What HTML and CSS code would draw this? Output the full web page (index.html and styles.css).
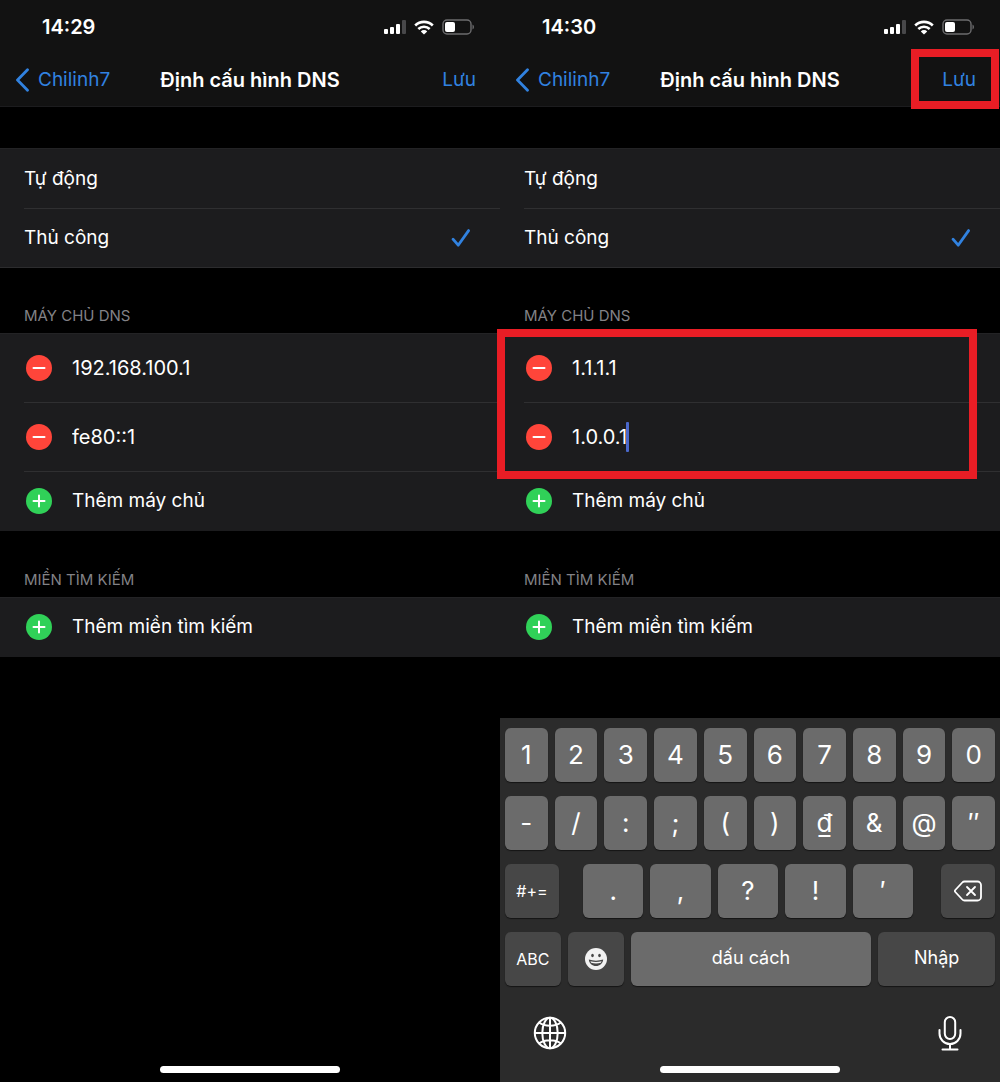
FILE: index.html
```html
<!DOCTYPE html>
<html lang="vi">
  <head>
    <meta charset="UTF-8" />
    <meta name="viewport" content="width=device-width, initial-scale=1.0" />
    <title>Định cấu hình DNS</title>
    <link rel="stylesheet" href="styles.css">
  </head>
  <body>
    <!-- shared icons -->
    <svg class="icon-defs" aria-hidden="true">
      <symbol id="icon-signal" viewBox="0 0 22 15">
        <rect x="0" y="9" width="4" height="5" rx="1" fill="#fff" />
        <rect x="6" y="7" width="4" height="7" rx="1" fill="#fff" />
        <rect x="12" y="4" width="4" height="10" rx="1" fill="#fff" />
        <rect x="18" y="0" width="4" height="14" rx="1" fill="#48484a" />
      </symbol>
      <symbol id="icon-wifi" viewBox="0 0 20 15">
        <g fill="none" stroke="#fff" stroke-width="2.6">
          <path d="M1.2 5.5a12.6 12.6 0 0 1 17.6 0" />
          <path d="M4.3 9a8.2 8.2 0 0 1 11.4 0" />
        </g>
        <path d="M10 14.6l-3.2-3.2a4.6 4.6 0 0 1 6.4 0z" fill="#fff" />
      </symbol>
      <symbol id="icon-battery" viewBox="0 0 33 16">
        <rect x="1" y="1" width="28" height="14" rx="4" fill="none" stroke="#6c6c6e" stroke-width="1.4" />
        <rect x="3" y="3" width="10" height="10" rx="2" fill="#fff" />
        <path d="M30.5 5.5v5c2-1 2-4 0-5z" fill="#6c6c6e" />
      </symbol>
      <symbol id="icon-back" viewBox="0 0 15 24">
        <path d="M12.5 1.8L2.5 12l10 10.2" fill="none" stroke="currentColor" stroke-width="2.8" stroke-linecap="round" stroke-linejoin="round" />
      </symbol>
      <symbol id="icon-check" viewBox="0 0 20 20">
        <path d="M2 11.2l5.2 6L17.6 2.6" fill="none" stroke="currentColor" stroke-width="2.8" stroke-linecap="round" stroke-linejoin="round" />
      </symbol>
      <symbol id="icon-minus" viewBox="0 0 26 26">
        <circle cx="13" cy="13" r="13" fill="#ff453a" />
        <path d="M7.5 13h11" stroke="#fff" stroke-width="2" stroke-linecap="round" />
      </symbol>
      <symbol id="icon-plus" viewBox="0 0 26 26">
        <circle cx="13" cy="13" r="13" fill="#30d158" />
        <path d="M7.5 13h11M13 7.5v11" stroke="#fff" stroke-width="2" stroke-linecap="round" />
      </symbol>
    </svg>

    <main class="screens">
      <section class="screen">
        <header class="top">
          <div class="status-bar">
            <time class="clock">14:29</time>
            <div class="status-icons">
              <svg width="22" height="15"><use href="#icon-signal" /></svg>
              <svg width="20" height="15"><use href="#icon-wifi" /></svg>
              <svg width="33" height="16"><use href="#icon-battery" /></svg>
            </div>
          </div>
          <nav class="nav-bar">
            <a href="#" class="nav-back"><svg width="15" height="24"><use href="#icon-back" /></svg>Chilinh7</a>
            <h1 class="nav-title">Định cấu hình DNS</h1>
            <button type="button" class="nav-save">Lưu</button>
          </nav>
        </header>

        <div class="group group-mode">
          <label class="row row-mode">
            <span>Tự động</span>
            <input type="radio" name="mode-left" class="mode-input" />
            <svg class="mode-check" width="20" height="20"><use href="#icon-check" /></svg>
          </label>
          <label class="row row-mode">
            <span>Thủ công</span>
            <input type="radio" name="mode-left" class="mode-input" checked />
            <svg class="mode-check" width="20" height="20"><use href="#icon-check" /></svg>
          </label>
        </div>

        <h2 class="group-title">MÁY CHỦ DNS</h2>
        <div class="group">
          <div class="servers">
            <div class="row row-server">
              <button type="button" class="btn-icon" aria-label="Xóa"><svg width="26" height="26"><use href="#icon-minus" /></svg></button>
              <input type="text" class="server-input" aria-label="Máy chủ DNS 1" value="192.168.100.1" />
            </div>
            <div class="row row-server">
              <button type="button" class="btn-icon" aria-label="Xóa"><svg width="26" height="26"><use href="#icon-minus" /></svg></button>
              <input type="text" class="server-input" aria-label="Máy chủ DNS 2" value="fe80::1" />
            </div>
          </div>
          <button type="button" class="row row-add"><svg width="26" height="26"><use href="#icon-plus" /></svg>Thêm máy chủ</button>
        </div>

        <h2 class="group-title">MIỀN TÌM KIẾM</h2>
        <div class="group">
          <button type="button" class="row row-add"><svg width="26" height="26"><use href="#icon-plus" /></svg>Thêm miền tìm kiếm</button>
        </div>

        <div class="home-indicator"></div>
      </section>

      <section class="screen">
        <header class="top">
          <div class="status-bar">
            <time class="clock">14:30</time>
            <div class="status-icons">
              <svg width="22" height="15"><use href="#icon-signal" /></svg>
              <svg width="20" height="15"><use href="#icon-wifi" /></svg>
              <svg width="33" height="16"><use href="#icon-battery" /></svg>
            </div>
          </div>
          <nav class="nav-bar">
            <a href="#" class="nav-back"><svg width="15" height="24"><use href="#icon-back" /></svg>Chilinh7</a>
            <h1 class="nav-title">Định cấu hình DNS</h1>
            <button type="button" class="nav-save">Lưu</button>
            <div class="mark mark-save"></div>
          </nav>
        </header>

        <div class="group group-mode">
          <label class="row row-mode">
            <span>Tự động</span>
            <input type="radio" name="mode-right" class="mode-input" />
            <svg class="mode-check" width="20" height="20"><use href="#icon-check" /></svg>
          </label>
          <label class="row row-mode">
            <span>Thủ công</span>
            <input type="radio" name="mode-right" class="mode-input" checked />
            <svg class="mode-check" width="20" height="20"><use href="#icon-check" /></svg>
          </label>
        </div>

        <h2 class="group-title">MÁY CHỦ DNS</h2>
        <div class="group">
          <div class="servers">
            <div class="row row-server">
              <button type="button" class="btn-icon" aria-label="Xóa"><svg width="26" height="26"><use href="#icon-minus" /></svg></button>
              <input type="text" class="server-input" aria-label="Máy chủ DNS 1" value="1.1.1.1" />
            </div>
            <div class="row row-server">
              <button type="button" class="btn-icon" aria-label="Xóa"><svg width="26" height="26"><use href="#icon-minus" /></svg></button>
              <input type="text" class="server-input editing" aria-label="Máy chủ DNS 2" value="1.0.0.1" />
              <span class="caret"></span>
            </div>
            <div class="mark mark-servers"></div>
          </div>
          <button type="button" class="row row-add"><svg width="26" height="26"><use href="#icon-plus" /></svg>Thêm máy chủ</button>
        </div>

        <h2 class="group-title">MIỀN TÌM KIẾM</h2>
        <div class="group">
          <button type="button" class="row row-add"><svg width="26" height="26"><use href="#icon-plus" /></svg>Thêm miền tìm kiếm</button>
        </div>

        <div class="keyboard">
          <div class="key-row">
            <button type="button" class="key">1</button>
            <button type="button" class="key">2</button>
            <button type="button" class="key">3</button>
            <button type="button" class="key">4</button>
            <button type="button" class="key">5</button>
            <button type="button" class="key">6</button>
            <button type="button" class="key">7</button>
            <button type="button" class="key">8</button>
            <button type="button" class="key">9</button>
            <button type="button" class="key">0</button>
          </div>
          <div class="key-row">
            <button type="button" class="key">-</button>
            <button type="button" class="key">/</button>
            <button type="button" class="key">:</button>
            <button type="button" class="key">;</button>
            <button type="button" class="key">(</button>
            <button type="button" class="key">)</button>
            <button type="button" class="key">₫</button>
            <button type="button" class="key">&amp;</button>
            <button type="button" class="key">@</button>
            <button type="button" class="key">″</button>
          </div>
          <div class="key-row key-row-marks">
            <button type="button" class="key key-dark key-symbols">#+=</button>
            <div class="key-group">
              <button type="button" class="key">.</button>
              <button type="button" class="key">,</button>
              <button type="button" class="key">?</button>
              <button type="button" class="key">!</button>
              <button type="button" class="key">′</button>
            </div>
            <button type="button" class="key key-dark" aria-label="Xóa lùi">
              <svg width="28" height="22" viewBox="0 0 28 22" fill="none" stroke="#fff" stroke-width="1.8" stroke-linecap="round" stroke-linejoin="round">
                <path d="M10.5 1.5h13a3.5 3.5 0 0 1 3.5 3.5v12a3.5 3.5 0 0 1-3.5 3.5h-13a3 3 0 0 1-2.2-1L1.3 12a1.5 1.5 0 0 1 0-2l7-7.500a3 3 0 0 1 2.200-1z" />
                <path d="M13 7l8 8M21 7l-8 8" />
              </svg>
            </button>
          </div>
          <div class="key-row key-row-space">
            <button type="button" class="key key-dark key-abc">ABC</button>
            <button type="button" class="key key-dark" aria-label="Biểu tượng cảm xúc">
              <svg width="22" height="22" viewBox="0 0 22 22">
                <circle cx="11" cy="11" r="11" fill="#f2f2f2" />
                <ellipse cx="7.5" cy="7.5" rx="1.3" ry="1.7" fill="#474747" />
                <ellipse cx="14.5" cy="7.5" rx="1.3" ry="1.7" fill="#474747" />
                <path d="M3.8 11.5c4.5 1.5 9.9 1.5 14.4 0-.4 4-3.4 6.5-7.2 6.5s-6.8-2.5-7.2-6.5z" fill="#474747" />
                <path d="M5.4 13.2c3.5 1 7.7 1 11.2 0l-.7 1.6c-3 .9-6.8.9-9.8 0z" fill="#f2f2f2" />
              </svg>
            </button>
            <button type="button" class="key key-word">dấu cách</button>
            <button type="button" class="key key-dark key-word">Nhập</button>
          </div>
          <div class="key-tools">
            <button type="button" class="btn-icon" aria-label="Đổi bàn phím">
              <svg width="34" height="34" viewBox="0 0 34 34" fill="none" stroke="#fff" stroke-width="2">
                <circle cx="17" cy="17" r="15.2" />
                <ellipse cx="17" cy="17" rx="7.7" ry="15.2" />
                <path d="M17 1.8v30.4M1.8 17h30.4M6 6.5c5.8 4.2 16.2 4.2 22 0M6 27.5c5.8-4.2 16.2-4.2 22 0" />
              </svg>
            </button>
            <button type="button" class="btn-icon" aria-label="Đọc chính tả">
              <svg width="34" height="36" viewBox="0 0 34 36" fill="none" stroke="#fff" stroke-width="2" stroke-linecap="round">
                <rect x="11.8" y="1" width="10.4" height="22" rx="5.2" />
                <path d="M6.5 14v3.500a10.5 10.5 0 0 0 21 0V14M17 28v5.500M9.500 33.500h15" />
              </svg>
            </button>
          </div>
          <div class="home-indicator"></div>
        </div>
      </section>
    </main>
  </body>
</html>
```

FILE: styles.css
```css
* {
  margin: 0;
  padding: 0;
  box-sizing: border-box;
}

body {
  background-color: #000;
  color: #fff;
  font-family: Inter, "Noto Sans", sans-serif;
  font-size: 19px;
  line-height: 24px;
}

button,
input {
  border: none;
  background: none;
  color: inherit;
  font: inherit;
}

button {
  cursor: pointer;
}

svg {
  display: block;
  flex-shrink: 0;
}

.icon-defs {
  display: none;
}

.screens {
  display: grid;
  grid-template-columns: 1fr 1fr;
  min-height: 100vh;
}

.screen {
  display: flex;
  flex-direction: column;
  min-width: 0;
}

/* Status bar and navigation */
.top {
  background-color: #121212;
  border-bottom: 1px solid #1c1c1e;
}

.status-bar {
  display: flex;
  justify-content: space-between;
  align-items: center;
  height: 54px;
  padding: 0 25px 0 42px;
}

.clock {
  font-size: 20px;
  font-weight: 600;
}

.status-icons {
  display: flex;
  align-items: center;
  gap: 8px;
}

.nav-bar {
  position: relative;
  display: grid;
  grid-template-columns: 1fr auto 1fr;
  align-items: center;
  height: 52px;
  padding: 0 24px 0 15px;
}

.nav-back {
  display: flex;
  align-items: center;
  gap: 8px;
  color: #3182e0;
  text-decoration: none;
}

/* evens out the narrower left padding of the bar */
.nav-title {
  padding-left: 9px;
  font-size: 20px;
  font-weight: 600;
}

.nav-save {
  justify-self: end;
  color: #3182e0;
}

/* Grouped lists */
.group {
  background-color: #1c1c1e;
  border-top: 1px solid #232325;
}

.group-mode {
  margin-top: 41px;
  border-bottom: 1px solid #2c2c2e;
}

.group-title {
  padding: 37px 24px 5px;
  color: #828286;
  font-size: 15px;
  font-weight: 400;
}

.group-mode + .group-title {
  padding-top: 36px;
}

.row {
  position: relative;
  display: flex;
  align-items: center;
  width: 100%;
  text-align: left;
}

/* separator starts at the text, not at the edge */
.row-mode + .row-mode::before,
.row-server::after {
  content: "";
  position: absolute;
  left: 24px;
  right: 0;
  height: 1px;
  background-color: #2f2f31;
}

.row-mode + .row-mode::before {
  top: 0;
}

.row-server::after {
  bottom: 0;
}

.row-mode {
  justify-content: space-between;
  height: 59px;
  padding: 0 29px 0 24px;
}

.mode-input {
  appearance: none;
  margin-left: auto;
}

.mode-check {
  visibility: hidden;
  color: #3182e0;
}

.mode-input:checked + .mode-check {
  visibility: visible;
}

.servers {
  position: relative;
}

.row-server,
.row-add {
  gap: 20px;
  padding: 0 24px 2px 26px;
}

.row-server {
  height: 69px;
}

.row-add {
  height: 59px;
}

.server-input {
  flex: 1;
  min-width: 0;
  outline: none;
  font-size: 20px;
}

.server-input.editing {
  flex: none;
  field-sizing: content;
}

.caret {
  width: 3px;
  height: 30px;
  margin-left: -21px;
  border-radius: 1px;
  background-color: #4a68cc;
}

.mark {
  position: absolute;
  border: 8px solid #e91d25;
  pointer-events: none;
}

.mark-save {
  top: -5px;
  right: 1px;
  width: 88px;
  height: 60px;
}

.mark-servers {
  top: -5px;
  right: 23px;
  bottom: -7px;
  left: -3px;
}

.home-indicator {
  width: 36%;
  height: 7px;
  margin: auto auto 9px;
  border-radius: 4px;
  background-color: #fff;
}

/* Keyboard */
.keyboard {
  display: flex;
  flex-direction: column;
  gap: 14px;
  margin-top: auto;
  padding-top: 10px;
  background-color: #2b2b2b;
}

.key-row {
  display: grid;
  grid-template-columns: repeat(10, 1fr);
  gap: 7px;
  padding: 0 5px;
}

.key {
  display: flex;
  justify-content: center;
  align-items: center;
  min-width: 0;
  height: 54px;
  border-radius: 6px;
  background-color: #6b6b6b;
  box-shadow: 0 1px 1px #151515;
  font-size: 26px;
}

.key-dark {
  background-color: #474747;
}

.key-row-marks {
  grid-template-columns: 27fr 167fr 27fr;
  gap: 24px;
}

.key-group {
  display: grid;
  grid-template-columns: repeat(5, 1fr);
  gap: 7px;
  padding-right: 4px;
}

.key-row-space {
  grid-template-columns: 56fr 56fr 241fr 117fr;
}

.key-symbols,
.key-abc {
  font-size: 16px;
}

.key-word {
  padding-bottom: 2px;
  font-size: 18px;
}

.key-tools {
  display: flex;
  justify-content: space-between;
  align-items: flex-start;
  padding: 16px 33px 0;
}
```
